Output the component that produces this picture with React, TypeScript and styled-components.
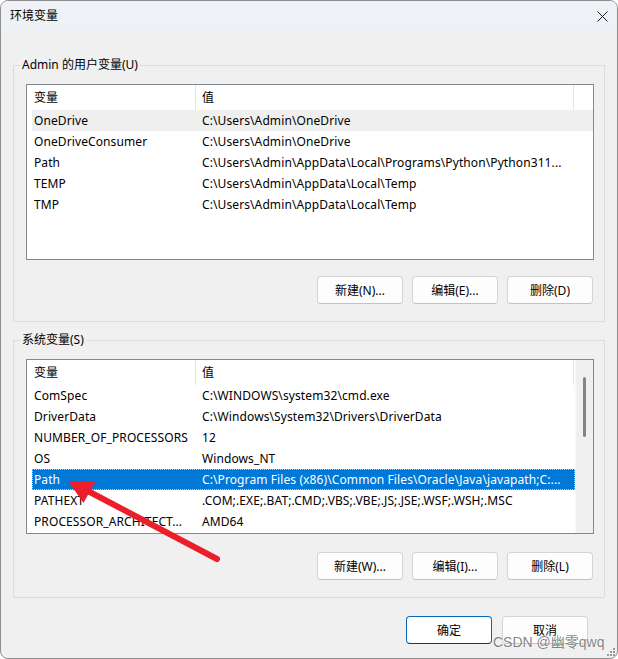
import React from "react";
import styled, { createGlobalStyle, css } from "styled-components";

const GlobalStyle = createGlobalStyle`
  html, body { margin: 0; padding: 0; background: #ffffff; }
  * { box-sizing: border-box; }
`;

const FONT = `"Noto Sans", "Noto Sans CJK SC", sans-serif`;

const Window = styled.div`
  position: relative;
  width: 618px;
  height: 659px;
  border: 1px solid #8e8e8e;
  border-radius: 8px;
  background: #f0f0f0;
  overflow: hidden;
  display: flex;
  flex-direction: column;
  font-family: ${FONT};
  font-size: 12px;
  color: #000;
`;

const TitleBar = styled.div`
  height: 30px;
  flex: none;
  background: #eef2f6;
  display: flex;
  align-items: center;
  justify-content: space-between;
  padding: 0 9px 0 9px;
`;

const Title = styled.span`
  font-size: 12px;
  line-height: 16px;
`;

const CloseButton = styled.div`
  width: 12px;
  height: 12px;
  display: flex;
  align-items: center;
  justify-content: center;
`;

const Body = styled.div`
  flex: 1;
  display: flex;
  flex-direction: column;
  padding: 26px 12px 0 12px;
`;

const Group = styled.fieldset<{ $gap?: number }>`
  margin: ${(p) => p.$gap ?? 0}px 0 0 0;
  border: 1px solid #dcdcdc;
  padding: 0 10px 17px 12px;
  min-width: 0;
`;

const Legend = styled.legend`
  margin-left: -6px;
  padding: 0 2px;
  font-size: 12px;
  line-height: 16px;
`;

const ListBox = styled.div<{ $h: number }>`
  margin-top: 11px;
  height: ${(p) => p.$h}px;
  border: 1px solid #828790;
  background: #ffffff;
  display: flex;
  overflow: hidden;
`;

const ListMain = styled.div`
  flex: 1;
  display: flex;
  flex-direction: column;
  min-width: 0;
`;

const HeaderRow = styled.div`
  display: grid;
  grid-template-columns: 169px 378px;
  height: 25px;
  flex: none;
`;

const HeaderCell = styled.div<{ $pad: number }>`
  padding-left: ${(p) => p.$pad}px;
  line-height: 25px;
  border-right: 1px solid #e5e5e5;
`;

const Row = styled.div<{ $state?: "hover" | "selected" }>`
  display: grid;
  grid-template-columns: 163px 378px;
  margin-left: 5px;
  height: 21px;
  flex: none;
  line-height: 21px;
  letter-spacing: 0.1px;
  white-space: nowrap;
  ${(p) =>
    p.$state === "hover" &&
    css`
      background: #efefef;
    `}
  ${(p) =>
    p.$state === "selected" &&
    css`
      background: #0078d7;
      color: #ffffff;
      outline: 1px dotted #a9d0f5;
      outline-offset: -1px;
    `}
`;

const Cell = styled.div<{ $pad: number }>`
  padding-left: ${(p) => p.$pad}px;
  overflow: hidden;
`;

const ScrollTrack = styled.div`
  width: 18px;
  flex: none;
  background: #f0f0f0;
  border-left: 1px solid #f7f7f7;
  padding-top: 17px;
  display: flex;
  justify-content: center;
`;

const ScrollThumb = styled.div`
  width: 3px;
  height: 60px;
  border-radius: 2px;
  background: #858585;
`;

const ButtonRow = styled.div<{ $top: number }>`
  display: flex;
  justify-content: flex-end;
  gap: 9px;
  margin-top: ${(p) => p.$top}px;
  padding-right: 1px;
`;

const Button = styled.button<{ $primary?: boolean }>`
  width: 86px;
  height: 28px;
  border-radius: 4px;
  background: #fdfdfd;
  border: 1px solid #d4d4d4;
  border-bottom-color: #c2c2c2;
  font-family: ${FONT};
  font-size: 12px;
  color: #000;
  padding: 0;
  ${(p) =>
    p.$primary &&
    css`
      border: 1px solid #0067c0;
      border-bottom-color: #003e73;
      background: #ffffff;
    `}
`;

const Footer = styled.div`
  display: flex;
  justify-content: flex-end;
  gap: 10px;
  margin-top: 18px;
  padding-right: 17px;
`;

const Overlay = styled.svg`
  position: absolute;
  left: -1px;
  top: -1px;
  pointer-events: none;
`;

const Watermark = styled.div`
  position: absolute;
  left: 492px;
  top: 632px;
  font-family: "Liberation Sans", "Noto Sans CJK SC", sans-serif;
  font-size: 14px;
  line-height: 18px;
  color: rgba(110, 110, 110, 0.85);
  text-shadow: 0 0 2px rgba(255, 255, 255, 0.9);
  white-space: nowrap;
  pointer-events: none;
`;

type Item = { name: string; value: string; state?: "hover" | "selected" };

const userVars: Item[] = [
  { name: "OneDrive", value: "C:\\Users\\Admin\\OneDrive", state: "hover" },
  { name: "OneDriveConsumer", value: "C:\\Users\\Admin\\OneDrive" },
  { name: "Path", value: "C:\\Users\\Admin\\AppData\\Local\\Programs\\Python\\Python311..." },
  { name: "TEMP", value: "C:\\Users\\Admin\\AppData\\Local\\Temp" },
  { name: "TMP", value: "C:\\Users\\Admin\\AppData\\Local\\Temp" },
];

const sysVars: Item[] = [
  { name: "ComSpec", value: "C:\\WINDOWS\\system32\\cmd.exe" },
  { name: "DriverData", value: "C:\\Windows\\System32\\Drivers\\DriverData" },
  { name: "NUMBER_OF_PROCESSORS", value: "12" },
  { name: "OS", value: "Windows_NT" },
  {
    name: "Path",
    value: "C:\\Program Files (x86)\\Common Files\\Oracle\\Java\\javapath;C:...",
    state: "selected",
  },
  { name: "PATHEXT", value: ".COM;.EXE;.BAT;.CMD;.VBS;.VBE;.JS;.JSE;.WSF;.WSH;.MSC" },
  { name: "PROCESSOR_ARCHITECT...", value: "AMD64" },
];

function VarList({ items, height, scroll }: { items: Item[]; height: number; scroll?: boolean }) {
  return (
    <ListBox $h={height}>
      <ListMain>
        <HeaderRow>
          <HeaderCell $pad={7}>变量</HeaderCell>
          <HeaderCell $pad={6}>值</HeaderCell>
        </HeaderRow>
        {items.map((it, i) => (
          <Row key={i} $state={it.state}>
            <Cell $pad={2}>{it.name}</Cell>
            <Cell $pad={7}>{it.value}</Cell>
          </Row>
        ))}
      </ListMain>
      {scroll && (
        <ScrollTrack>
          <ScrollThumb />
        </ScrollTrack>
      )}
    </ListBox>
  );
}

export default function App() {
  return (
    <>
      <GlobalStyle />
      <Window>
        <TitleBar>
          <Title>环境变量</Title>
          <CloseButton>
            <svg width="11" height="11" viewBox="0 0 11 11">
              <path d="M0.5 0.5 L10.5 10.5 M10.5 0.5 L0.5 10.5" stroke="#1b1b1b" strokeWidth="1" fill="none" />
            </svg>
          </CloseButton>
        </TitleBar>
        <Body>
          <Group>
            <Legend>Admin 的用户变量(U)</Legend>
            <VarList items={userVars} height={176} />
            <ButtonRow $top={16}>
              <Button>新建(N)...</Button>
              <Button>编辑(E)...</Button>
              <Button>删除(D)</Button>
            </ButtonRow>
          </Group>
          <Group $gap={10}>
            <Legend>系统变量(S)</Legend>
            <VarList items={sysVars} height={175} scroll />
            <ButtonRow $top={18}>
              <Button>新建(W)...</Button>
              <Button>编辑(I)...</Button>
              <Button>删除(L)</Button>
            </ButtonRow>
          </Group>
          <Footer>
            <Button $primary>确定</Button>
            <Button>取消</Button>
          </Footer>
        </Body>
        <Overlay width="618" height="659" viewBox="0 0 618 659">
          <line x1="217" y1="559" x2="86" y2="490" stroke="#ea1f29" strokeWidth="6" strokeLinecap="round" />
          <polygon points="68,481 95,482 83.5,503" fill="#ea1f29" />
          <g fill="#9a9a9a">
            <rect x="613" y="648" width="2" height="2" />
            <rect x="610" y="651" width="2" height="2" />
            <rect x="613" y="651" width="2" height="2" />
            <rect x="607" y="654" width="2" height="2" />
            <rect x="610" y="654" width="2" height="2" />
            <rect x="613" y="654" width="2" height="2" />
          </g>
        </Overlay>
        <Watermark>CSDN @幽零qwq</Watermark>
      </Window>
    </>
  );
}
